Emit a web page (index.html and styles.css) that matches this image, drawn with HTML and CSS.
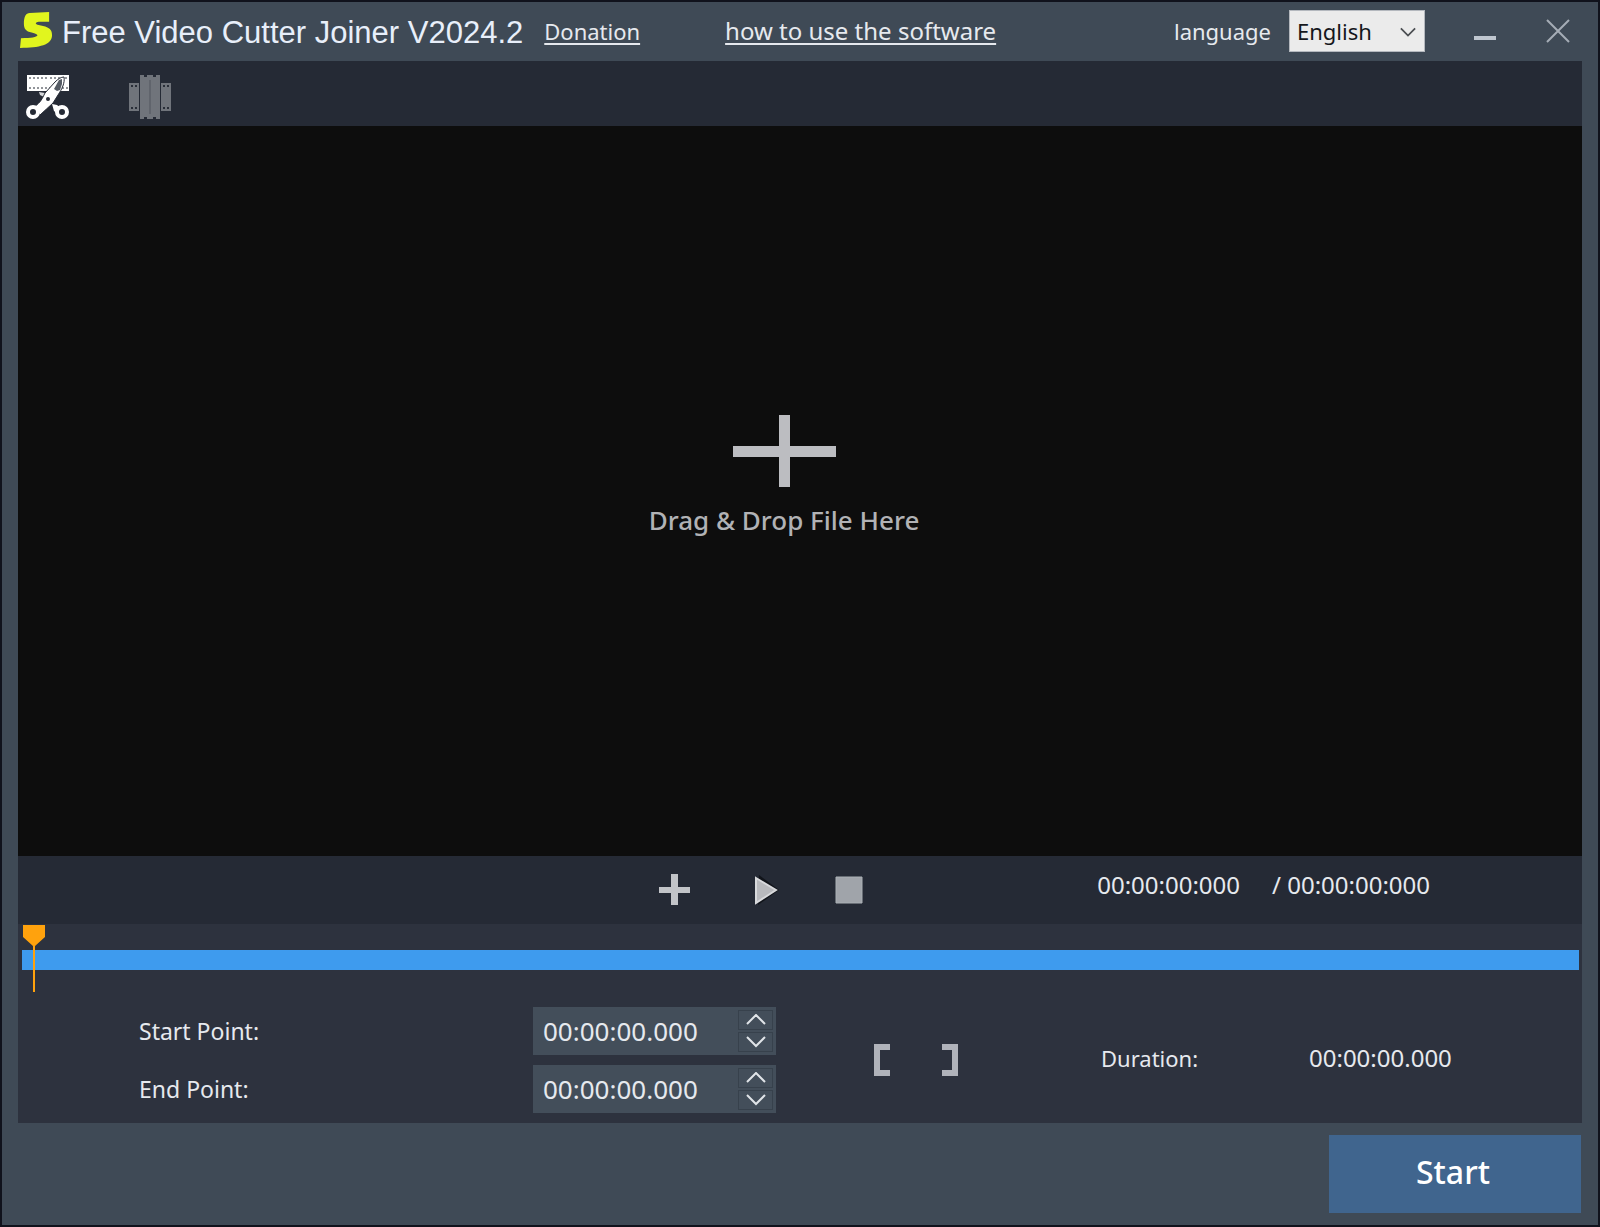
FILE: index.html
```html
<!DOCTYPE html>
<html lang="en">
<head>
<meta charset="utf-8">
<meta name="viewport" content="width=device-width, initial-scale=1">
<title>Free Video Cutter Joiner V2024.2</title>
<link rel="stylesheet" href="styles.css">
</head>
<body>
<div class="window">
  <header class="titlebar">
    <svg class="logo" viewBox="0 0 34 38" aria-hidden="true"><path d="M10 1 30 0 30 10 21 10C16 10 15 12 18 13L26 15C31 17 33 19 33 24 33 34 20 37 0 37L1 27C12 27 17 26 18 24 18 23 16 22 12 21 6 20 4 17 4 12 4 5 6 1 10 1Z"/></svg>
    <h1 class="title">Free Video Cutter Joiner V2024.2</h1>
    <nav class="links">
      <a href="#donation">Donation</a>
      <a class="help" href="#help">how to use the software</a>
    </nav>
    <label class="language-label" for="language">language</label>
    <div class="select-box">
      <select id="language"><option>English</option></select>
      <svg class="chevron" viewBox="0 0 18 10" aria-hidden="true"><path d="M1 1 9 9 17 1"/></svg>
    </div>
    <button class="window-button" type="button" aria-label="Minimize"><svg width="24" height="24" viewBox="0 0 24 24"><path class="bar" d="M1 17H23V21H1Z"/></svg></button>
    <button class="window-button" type="button" aria-label="Close"><svg width="24" height="24" viewBox="0 0 24 24"><path class="cross" d="M1 1 23 23M23 1 1 23"/></svg></button>
  </header>

  <main class="workspace">
    <div class="toolbar">
      <button class="tool" type="button" aria-label="Cut video">
        <svg width="44" height="46" viewBox="0 0 44 46">
          <path fill="#fff" d="M1 1H43V17H1Z"/>
          <path stroke="#252a35" stroke-width="1" stroke-dasharray="2 2" d="M3 4H21M24 4H34M3 14H25M36 14H42M39 4H42"/>
          <path fill="#d5d7da" d="M13 18 19 19 18 23 14 21Z"/>
          <path fill="#fff" stroke="#252a35" stroke-width="1" d="M38 3C39 9 36 15 32 21L27 29C23 33 18 37 14 41L8 33C15 28 16 25 19 19L29 8C32 5 35 3 38 3Z"/>
          <path fill="#555b64" d="M33 6 36 5 36 10 34 16 31 17 28 15Z"/>
          <path fill="#fff" d="M26 30 31 31 37 36 33 41 28 37Z"/>
          <circle cx="22" cy="25" r="2" fill="#252a35"/>
          <circle cx="7" cy="38" r="5" fill="#252a35" stroke="#fff" stroke-width="4"/>
          <circle cx="36" cy="38" r="5" fill="#252a35" stroke="#fff" stroke-width="4"/>
        </svg>
      </button>
      <button class="tool" type="button" aria-label="Join videos">
        <svg width="44" height="46" viewBox="0 0 44 46">
          <path fill="#70747b" d="M1 9H11V37H1ZM33 9H43V37H33ZM12 1H16V3H19V1H25V3H28V1H32V45H28V43H25V45H19V43H16V45H12Z"/>
          <path stroke="#60646c" stroke-width="2" d="M22 6V40"/>
          <path stroke="#292e38" stroke-width="2" stroke-dasharray="2 2" d="M3 12H9M3 34H9M35 12H41M35 34H41"/>
        </svg>
      </button>
    </div>

    <section class="video" aria-label="Preview">
      <button class="drop" type="button">
        <svg width="104" height="74" viewBox="0 0 104 74" aria-hidden="true"><path fill="#bcbdc1" d="M47 1H58V32H104V43H58V73H47V43H1V32H47Z"/></svg>
        <span>Drag &amp; Drop File Here</span>
      </button>
    </section>

    <section class="transport" aria-label="Playback">
      <div class="controls">
        <button type="button" aria-label="Add file"><svg width="32" height="32" viewBox="0 0 32 32"><path fill="#c2c4c8" d="M12 0H19V13H31V19H19V31H12V19H0V13H12Z"/></svg></button>
        <button type="button" aria-label="Play"><svg width="32" height="32" viewBox="0 0 32 32"><path fill="#11141a" d="M12 1 32 16 11 31Z"/><path fill="#b8b9bd" stroke="#d8d9dc" stroke-width="2" d="M9 4 29 16 9 29Z"/></svg></button>
        <button type="button" aria-label="Stop"><svg width="32" height="32" viewBox="0 0 32 32"><path fill="#a0a4aa" stroke="#abb0b5" d="M1 3H27V29H1Z"/></svg></button>
      </div>
      <div class="times"><output>00:00:00:000</output><span>/ 00:00:00:000</span></div>
    </section>

    <section class="trim" aria-label="Trim">
      <div class="timeline">
        <div class="track"></div>
        <svg class="playhead" viewBox="0 0 22 67" aria-hidden="true"><path fill="#ffa20d" d="M0 0H22V12L12 21V67H10V21L0 12Z"/></svg>
      </div>
      <div class="settings">
        <div class="points">
          <label for="start">Start Point:</label>
          <div class="spin">
            <input id="start" type="text" value="00:00:00.000">
            <div class="steps">
              <button type="button" aria-label="Increase start point"><svg viewBox="0 0 20 12"><path d="M1 10 10 1 19 10"/></svg></button>
              <button type="button" aria-label="Decrease start point"><svg viewBox="0 0 20 12"><path d="M1 1 10 10 19 1"/></svg></button>
            </div>
          </div>
          <label for="end">End Point:</label>
          <div class="spin">
            <input id="end" type="text" value="00:00:00.000">
            <div class="steps">
              <button type="button" aria-label="Increase end point"><svg viewBox="0 0 20 12"><path d="M1 10 10 1 19 10"/></svg></button>
              <button type="button" aria-label="Decrease end point"><svg viewBox="0 0 20 12"><path d="M1 1 10 10 19 1"/></svg></button>
            </div>
          </div>
        </div>
        <div class="marks">
          <button type="button" aria-label="Set start point"><svg width="16" height="34" viewBox="0 0 16 34"><path fill="#b0b3ba" d="M0 1H16V7H6V27H16V33H0Z"/></svg></button>
          <button type="button" aria-label="Set end point"><svg width="16" height="34" viewBox="0 0 16 34"><path fill="#b0b3ba" d="M16 1H0V7H10V27H0V33H16Z"/></svg></button>
        </div>
        <div class="duration"><span>Duration:</span><output>00:00:00.000</output></div>
      </div>
    </section>
  </main>

  <footer class="footer"><button class="start" type="button">Start</button></footer>
</div>
</body>
</html>
```
FILE: styles.css
```css
* {
  box-sizing: border-box;
}

body {
  margin: 0;
  background: #10131a;
  color: #e6e9ee;
  font: 22px/32px "Noto Sans", "Open Sans", sans-serif;
}

button {
  display: grid;
  place-items: center;
  padding: 0;
  border: 0;
  background: none;
  color: inherit;
  font: inherit;
}

svg {
  display: block;
  fill: none;
}

.window {
  display: flex;
  flex-direction: column;
  min-height: 100vh;
  border: 2px solid #10121c;
  background: #3f4a56;
}

.titlebar {
  display: flex;
  align-items: center;
  height: 59px;
  padding: 0 16px 2px 18px;
}

.logo {
  width: 33px;
  height: 37px;
  margin-right: 9px;
  fill: #e1f51e;
}

.title {
  margin: 0;
  padding-top: 4px;
  color: #e8effa;
  font: 31px/36px "Liberation Sans", Arial, sans-serif;
}

.links {
  display: flex;
  gap: 85px;
  margin-left: 21px;
}

.links a {
  color: inherit;
  text-decoration-thickness: 2px;
  text-underline-offset: 3px;
}

.links .help {
  font-size: 24px;
}

.language-label {
  margin-left: auto;
}

.select-box {
  position: relative;
  width: 136px;
  height: 42px;
  margin: 0 36px 0 18px;
}

.select-box select {
  width: 100%;
  height: 100%;
  padding: 0 7px;
  appearance: none;
  border: 1px solid #b4b8be;
  border-radius: 0;
  background: #ebebeb;
  color: #15171c;
  font: 22px/32px "Noto Sans", "Open Sans", sans-serif;
}

.chevron {
  position: absolute;
  top: 17px;
  right: 9px;
  width: 16px;
  height: 10px;
  stroke: #4b4e52;
  stroke-width: 2;
  pointer-events: none;
}

.window-button {
  width: 48px;
  height: 48px;
}

.window-button + .window-button {
  margin-left: 25px;
}

.bar {
  fill: #bfc6cf;
}

.cross {
  stroke: #a5adb6;
  stroke-width: 2;
}

.workspace {
  display: flex;
  flex: 1;
  flex-direction: column;
  margin: 0 16px;
}

.toolbar {
  display: flex;
  align-items: center;
  gap: 58px;
  height: 65px;
  padding: 6px 8px 0;
  background: #252a35;
}

.video {
  display: grid;
  flex: 1;
  place-items: center;
  min-height: 240px;
  padding: 0 32px 32px 0;
  background: #0d0d0d;
}

.drop {
  gap: 16px;
  color: #b1b2b5;
  font-size: 26px;
  font-weight: 500;
}

.transport {
  display: grid;
  grid-template-columns: 41% 1fr 31%;
  align-items: center;
  height: 68px;
  background: #252a35;
}

.controls {
  grid-column: 2;
  display: flex;
  gap: 56px;
}

.times {
  display: flex;
  gap: 32px;
  padding-bottom: 10px;
  font-size: 24px;
}

.trim {
  height: 199px;
  background: #2d323e;
}

.timeline {
  position: relative;
  height: 83px;
  padding: 26px 3px 0 4px;
}

.track {
  height: 20px;
  background: #3e9bee;
}

.playhead {
  position: absolute;
  top: 1px;
  left: 5px;
  width: 22px;
  height: 67px;
}

.settings {
  display: grid;
  grid-template-columns: 773fr 310fr 481fr;
  height: 106px;
}

.points {
  display: grid;
  grid-template-columns: 1fr 243px;
  row-gap: 10px;
  align-items: center;
  margin-right: 15px;
  padding-left: 121px;
  font-size: 23px;
}

.spin {
  display: flex;
  height: 48px;
  padding: 3px;
  background: #434e5a;
}

.spin input {
  flex: 1;
  min-width: 0;
  padding: 0 7px;
  border: 0;
  background: none;
  color: inherit;
  font: 26px/32px "Noto Sans", "Open Sans", sans-serif;
}

.steps {
  display: grid;
  gap: 2px;
  width: 35px;
}

.steps button {
  border: 1px solid #37414c;
}

.steps svg {
  width: 20px;
  height: 12px;
  stroke: #e0e4e8;
  stroke-width: 2;
}

.marks {
  display: flex;
  gap: 52px;
  align-items: center;
  padding-left: 83px;
}

.duration {
  display: grid;
  grid-template-columns: 208px auto;
  align-items: center;
  padding-bottom: 4px;
}

.duration output {
  font-size: 24px;
}

.footer {
  display: flex;
  justify-content: flex-end;
  padding: 12px 17px;
}

.start {
  width: 252px;
  height: 78px;
  padding: 0 4px 4px 0;
  background: #40658e;
  color: #fff;
  font-size: 32px;
  font-weight: 500;
}
```
